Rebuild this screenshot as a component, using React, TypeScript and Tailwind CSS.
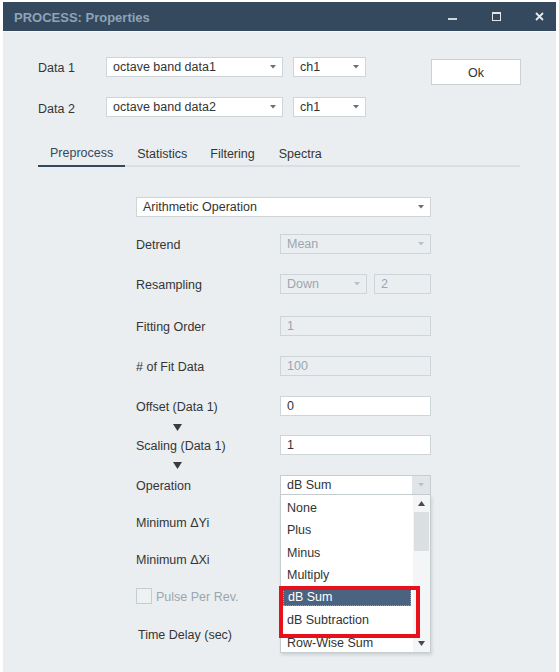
import React from "react";

type FieldProps = {
  value?: string;
  disabled?: boolean;
  caret?: boolean;
  className?: string;
};

function Caret({ disabled }: { disabled?: boolean }) {
  return (
    <svg width="6" height="4" viewBox="0 0 6 4" className="shrink-0">
      <polygon points="0,0 6,0 3,3.5" fill={disabled ? "#b9c1c7" : "#6b6f73"} />
    </svg>
  );
}

function Field({ value = "", disabled, caret, className = "" }: FieldProps) {
  const tone = disabled
    ? "bg-[#eaeef0] border-[#cdd5d9] text-[#9aa6b1]"
    : "bg-white border-[#cdd5d9] text-[#333]";
  return (
    <div
      className={`flex items-center justify-between h-[20px] border pl-[6px] pr-[6px] leading-none ${tone} ${className}`}
    >
      <span className="pt-[1px]">{value}</span>
      {caret && <Caret disabled={disabled} />}
    </div>
  );
}

function DownMark() {
  return (
    <svg width="9" height="7" viewBox="0 0 9 7" className="ml-[37px]">
      <polygon points="0,0 9,0 4.5,7" fill="#3b3b3b" />
    </svg>
  );
}

function Row({ label, children, className = "", labelClass = "" }: { label: string; children?: React.ReactNode; className?: string; labelClass?: string }) {
  return (
    <div className={`flex items-center h-[20px] ${className}`}>
      <div className={`w-[144px] shrink-0 pt-[2px] text-[#353535] ${labelClass}`}>{label}</div>
      {children}
    </div>
  );
}

const options = ["None", "Plus", "Minus", "Multiply", "dB Sum", "dB Subtraction", "Row-Wise Sum"];

function OperationSelect() {
  return (
    <div className="relative w-[151px] h-[20px]">
      <div className="flex h-full border border-[#c6cdd1] bg-white">
        <div className="flex-1 flex items-center pl-[6px] pt-[1px] text-[#333]">dB Sum</div>
        <div className="w-[18px] flex items-center justify-center bg-[#e1e5e8]">
          <Caret disabled />
        </div>
      </div>
      {/* open list */}
      <div className="absolute left-0 top-[20px] w-[151px] h-[158px] border border-[#c6cdd1] border-t-0 bg-white shadow-[1px_2px_3px_rgba(0,0,0,0.12)] flex overflow-hidden">
        <div className="flex-1 flex flex-col">
          {options.map((o) => (
            <div key={o} className="h-[22.5px] shrink-0 flex items-center px-[2px]">
              {o === "dB Sum" ? (
                <div className="w-full h-[19px] flex items-center pl-[4px] bg-[#4a6380] text-white border border-dotted border-[#8aa0b8]">
                  <span className="relative top-[1.5px]">{o}</span>
                </div>
              ) : (
                <span className="pl-[4px] relative top-[2px] text-[#333]">{o}</span>
              )}
            </div>
          ))}
        </div>
        <div className="w-[17px] flex flex-col bg-[#f3f5f6]">
          <div className="h-[17px] flex items-center justify-center">
            <svg width="7" height="5" viewBox="0 0 7 5">
              <polygon points="0,5 7,5 3.5,0" fill="#4a4a4a" />
            </svg>
          </div>
          <div className="h-[39px] mx-[1px] bg-[#dcdfe2]" />
          <div className="flex-1" />
          <div className="h-[17px] flex items-center justify-center">
            <svg width="7" height="5" viewBox="0 0 7 5">
              <polygon points="0,0 7,0 3.5,5" fill="#4a4a4a" />
            </svg>
          </div>
        </div>
      </div>
      {/* highlight frame */}
      <div className="absolute left-[-1px] top-[111px] w-[141px] h-[52px] border-[4px] border-[#e8101a]" />
    </div>
  );
}

export default function App() {
  return (
    <div className="w-[559px] h-[672px] bg-white pt-[2px] pl-[3px] font-['Liberation_Sans',Arial,sans-serif] text-[12.5px] overflow-hidden">
      <div className="w-[553px] h-[670px] bg-[#eaeef0] flex flex-col">
        {/* title bar */}
        <div className="h-[29px] shrink-0 bg-[#34495e] flex items-center pl-[11px] pr-[12px]">
          <span className="font-bold text-[13px] text-[#8fa3b8] mt-[2px]">PROCESS: Properties</span>
          <div className="ml-auto flex items-center">
            <div className="w-[9px] h-[2px] bg-[#cfd7de] mt-[4px]" />
            <div className="ml-[35px] w-[9px] h-[9px] border-[1.5px] border-t-2 border-[#dfe5ea]" />
            <svg width="9" height="9" viewBox="0 0 9 9" className="ml-[34px]">
              <path d="M1 1 L8 8 M8 1 L1 8" stroke="#e6ebef" strokeWidth="1.8" />
            </svg>
          </div>
        </div>
        <div className="h-[1px] bg-[#f4f6f7]" />

        <div className="pl-[35px] flex flex-col">
          {/* data pickers + ok */}
          <div className="flex mt-[25px]">
            <div className="flex flex-col gap-[20px]">
              <div className="flex items-center h-[20px]">
                <div className="w-[68px] relative top-[1px] text-[#353535]">Data 1</div>
                <Field value="octave band data1" caret className="w-[177px]" />
                <Field value="ch1" caret className="w-[73px] ml-[10px]" />
              </div>
              <div className="flex items-center h-[20px]">
                <div className="w-[68px] relative top-[2px] text-[#353535]">Data 2</div>
                <Field value="octave band data2" caret className="w-[177px]" />
                <Field value="ch1" caret className="w-[73px] ml-[10px]" />
              </div>
            </div>
            <div className="ml-[65px] mt-[2px] w-[90px] h-[26px] bg-white border border-[#c9d1d5] flex items-center justify-center pt-[3px] text-[#333]">
              Ok
            </div>
          </div>

          {/* tabs */}
          <div className="mt-[24px] w-[482px] h-[26px] flex border-b-2 border-[#d9dfe2]">
            <div className="px-[12px] h-[26px] -mb-[2px] pt-[1px] border-b-2 border-[#34495e] flex items-center text-[#34495e]">Preprocess</div>
            <div className="px-[12px] h-[24px] pt-[3px] flex items-center text-[#353535]">Statistics</div>
            <div className="px-[11px] h-[24px] pt-[3px] flex items-center text-[#353535]">Filtering</div>
            <div className="px-[13px] h-[24px] pt-[3px] flex items-center text-[#353535]">Spectra</div>
          </div>

          {/* preprocess form */}
          <div className="ml-[98px] w-[295px] flex flex-col mt-[30px]">
            <Field value="Arithmetic Operation" caret />
            <Row label="Detrend" className="mt-[17px]">
              <Field value="Mean" caret disabled className="w-[151px]" />
            </Row>
            <Row label="Resampling" className="mt-[20px]">
              <Field value="Down" caret disabled className="w-[87px]" />
              <Field value="2" disabled className="w-[57px] ml-[7px]" />
            </Row>
            <Row label="Fitting Order" className="mt-[22px]">
              <Field value="1" disabled className="w-[151px]" />
            </Row>
            <Row label="# of Fit Data" className="mt-[20px]">
              <Field value="100" disabled className="w-[151px]" />
            </Row>
            <Row label="Offset (Data 1)" className="mt-[20px]">
              <Field value="0" className="w-[151px]" />
            </Row>
            <div className="h-[19px] flex items-center pt-[3px]">
              <DownMark />
            </div>
            <Row label="Scaling (Data 1)">
              <Field value="1" className="w-[151px]" />
            </Row>
            <div className="h-[20px] flex items-center pt-[1px]">
              <DownMark />
            </div>
            <Row label="Operation" className="relative z-10">
              <OperationSelect />
            </Row>
            <Row label="Minimum ΔYi" className="mt-[17px]" />
            <Row label="Minimum ΔXi" className="mt-[17px]" />
            <div className="flex items-center h-[20px] mt-[17px]">
              <div className="w-[16px] h-[16px] border border-[#c4ccd1] bg-[#eef1f2]" />
              <span className="ml-[4px] pt-[2px] text-[#9aa6b1]">Pulse Per Rev.</span>
            </div>
            <Row label="Time Delay (sec)" className="mt-[18px]" labelClass="pl-[2px]" />
          </div>
        </div>
      </div>
    </div>
  );
}
